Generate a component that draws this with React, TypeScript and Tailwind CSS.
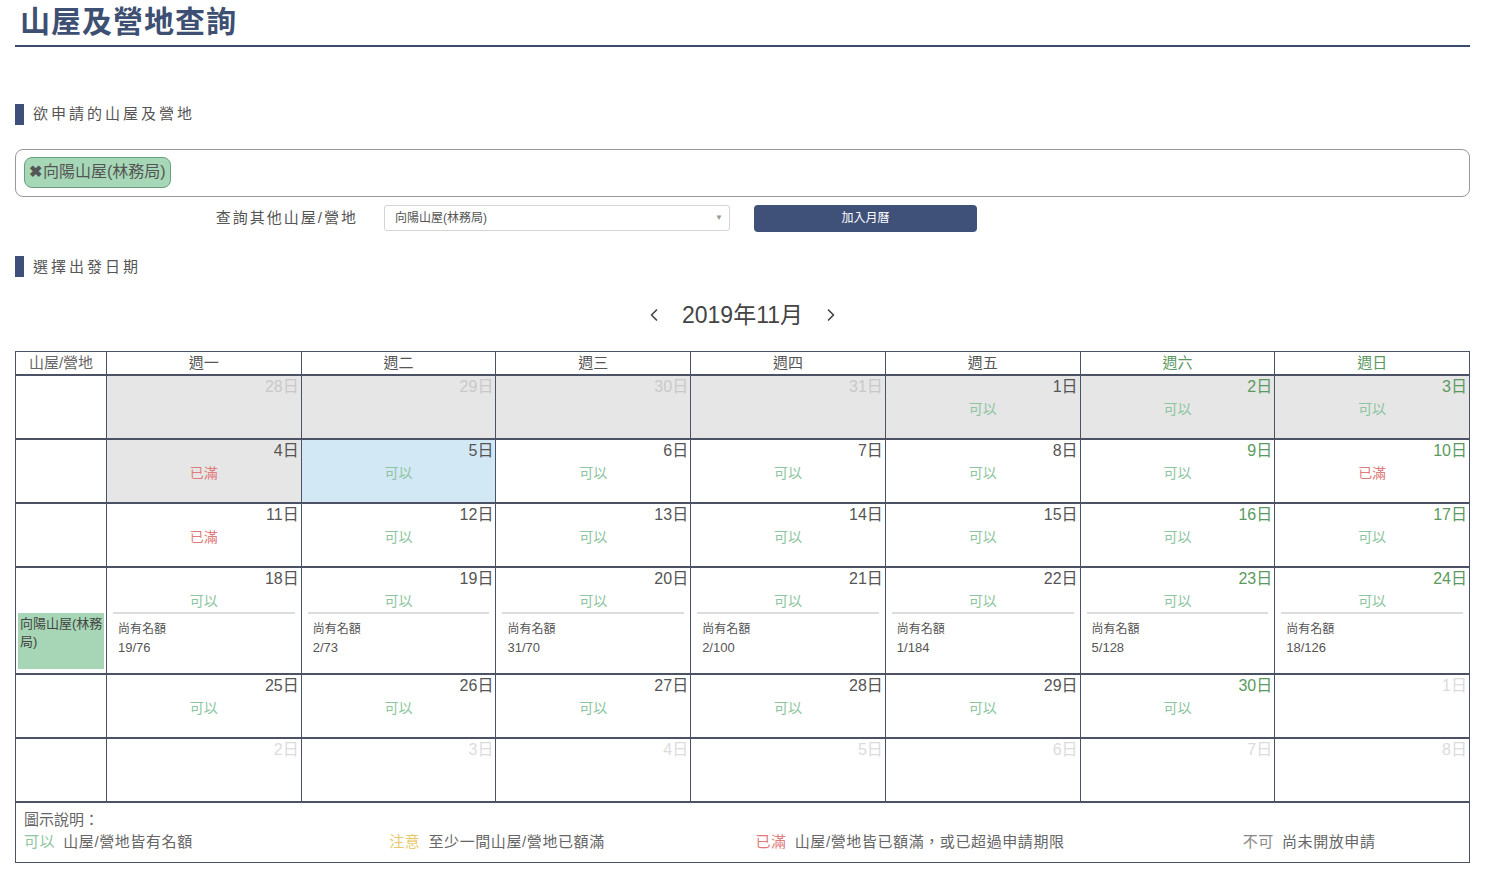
import { ChevronLeft, ChevronRight } from 'lucide-react';

type Day = {
  d: number;
  other?: boolean;
  past?: boolean;
  today?: boolean;
  s?: 'ok' | 'full';
  q?: string;
};

const weekNames = ['週一', '週二', '週三', '週四', '週五', '週六', '週日'];

const weeks: Day[][] = [
  [
    { d: 28, other: true, past: true },
    { d: 29, other: true, past: true },
    { d: 30, other: true, past: true },
    { d: 31, other: true, past: true },
    { d: 1, past: true, s: 'ok' },
    { d: 2, past: true, s: 'ok' },
    { d: 3, past: true, s: 'ok' },
  ],
  [
    { d: 4, past: true, s: 'full' },
    { d: 5, today: true, s: 'ok' },
    { d: 6, s: 'ok' },
    { d: 7, s: 'ok' },
    { d: 8, s: 'ok' },
    { d: 9, s: 'ok' },
    { d: 10, s: 'full' },
  ],
  [
    { d: 11, s: 'full' },
    { d: 12, s: 'ok' },
    { d: 13, s: 'ok' },
    { d: 14, s: 'ok' },
    { d: 15, s: 'ok' },
    { d: 16, s: 'ok' },
    { d: 17, s: 'ok' },
  ],
  [
    { d: 18, s: 'ok', q: '19/76' },
    { d: 19, s: 'ok', q: '2/73' },
    { d: 20, s: 'ok', q: '31/70' },
    { d: 21, s: 'ok', q: '2/100' },
    { d: 22, s: 'ok', q: '1/184' },
    { d: 23, s: 'ok', q: '5/128' },
    { d: 24, s: 'ok', q: '18/126' },
  ],
  [
    { d: 25, s: 'ok' },
    { d: 26, s: 'ok' },
    { d: 27, s: 'ok' },
    { d: 28, s: 'ok' },
    { d: 29, s: 'ok' },
    { d: 30, s: 'ok' },
    { d: 1, other: true },
  ],
  [
    { d: 2, other: true },
    { d: 3, other: true },
    { d: 4, other: true },
    { d: 5, other: true },
    { d: 6, other: true },
    { d: 7, other: true },
    { d: 8, other: true },
  ],
];

function SectionHeading({ title }: { title: string }) {
  return (
    <div className="flex items-center">
      <div className="w-[9px] h-[21px] bg-[#3e4f7a]" />
      <div className="ml-[9px] text-[15px] tracking-[3px] text-[#555]">{title}</div>
    </div>
  );
}

function DayCell({ day, col }: { day: Day; col: number }) {
  let bg = 'bg-white';
  if (day.past) bg = 'bg-[#e6e6e6]';
  if (day.today) bg = 'bg-[#d3e8f5]';

  let numColor = col >= 5 ? 'text-[#5a9a62]' : 'text-[#555]';
  if (day.other) numColor = day.past ? 'text-[#c9c9c9]' : 'text-[#dcdcdc]';

  return (
    <div className={`border-l border-[#4c5266] ${bg}`}>
      <div className={`text-right pr-[2px] text-[16px] leading-[22px] ${numColor}`}>{day.d}日</div>
      {day.s === 'ok' && (
        <div className="text-center text-[14px] leading-[20px] mt-[1px] text-[#8cc5a0]">可以</div>
      )}
      {day.s === 'full' && (
        <div className="text-center text-[14px] leading-[20px] mt-[1px] text-[#e07b7b]">已滿</div>
      )}
      {day.q && (
        <div>
          <div className="mx-[6px] mt-[1px] h-[2px] bg-[#dcdcdc]" />
          <div className="pl-[11px] mt-[6px] text-[12px] leading-[18px] text-[#555]">尚有名額</div>
          <div className="pl-[11px] mt-[1px] text-[13px] leading-[18px] text-[#555]">{day.q}</div>
        </div>
      )}
    </div>
  );
}

export default function App() {
  return (
    <div
      className="min-h-[876px] bg-white pl-[15px] pr-[30px] pb-[14px]"
      style={{ fontFamily: '"Liberation Sans", "Noto Sans CJK TC", sans-serif' }}
    >
      <div className="h-[47px] border-b-2 border-[#3b4a6b] pl-[5px]">
        <h1 className="text-[30px] leading-[44px] font-bold tracking-[1px] text-[#3d4f72]">山屋及營地查詢</h1>
      </div>

      <div className="mt-[56px]">
        <SectionHeading title="欲申請的山屋及營地" />
      </div>

      <div className="mt-[23px] h-[48px] border border-[#999] rounded-[8px] pt-[7px] pl-[8px]">
        <div className="inline-flex items-center h-[31px] pl-[4px] pr-[4px] bg-[#a6d7b6] border border-[#6a9f7c] rounded-[8px] text-[16px] text-[#555]">
          <span className="text-[16px] font-bold text-[#555] mr-[1px]">✖</span>
          向陽山屋(林務局)
        </div>
      </div>

      <div className="mt-[8px] flex items-center">
        <div className="w-[343px] text-right text-[15px] tracking-[2px] text-[#555]">查詢其他山屋/營地</div>
        <div className="ml-[26px] w-[346px] h-[26px] border border-[#d5d5d5] rounded-[3px] flex items-center justify-between pl-[10px] pr-[6px] text-[12px] text-[#555]">
          <span>向陽山屋(林務局)</span>
          <span className="text-[8px] text-[#999]">▼</span>
        </div>
        <button className="ml-[24px] w-[223px] h-[27px] rounded-[4px] bg-[#3f5079] text-white text-[12px]">加入月曆</button>
      </div>

      <div className="mt-[24px]">
        <SectionHeading title="選擇出發日期" />
      </div>

      <div className="mt-[22px] flex items-center justify-center text-[#444]">
        <ChevronLeft className="w-[20px] h-[20px]" strokeWidth={2} />
        <div className="mx-[18px] text-[23px] leading-[30px]">2019年11月</div>
        <ChevronRight className="w-[20px] h-[20px]" strokeWidth={2} />
      </div>

      <div className="mt-[21px] border border-[#4c5266]">
        <div className="grid grid-cols-[90px_repeat(7,minmax(0,1fr))] h-[22px] text-[15px] leading-[21px]">
          <div className="text-center text-[#666]">山屋/營地</div>
          {weekNames.map((w, i) => (
            <div
              key={w}
              className={`border-l border-[#4c5266] text-center ${i >= 5 ? 'text-[#5a9a62]' : 'text-[#555]'}`}
            >
              {w}
            </div>
          ))}
        </div>

        {weeks.map((week, wi) => (
          <div
            key={wi}
            className={`grid grid-cols-[90px_repeat(7,minmax(0,1fr))] border-t-2 border-[#4c5266] ${
              wi === 3 ? 'h-[107px]' : 'h-[64px]'
            }`}
          >
            {wi === 3 ? (
              <div className="flex flex-col justify-end pb-[4px] px-[2px]">
                <div className="h-[56px] bg-[#a6d6b5] pt-[2px] pl-[2px] text-[13px] leading-[18px] text-[#444]">
                  向陽山屋(林務局)
                </div>
              </div>
            ) : (
              <div />
            )}
            {week.map((day, di) => (
              <DayCell key={di} day={day} col={di} />
            ))}
          </div>
        ))}

        <div className="border-t-2 border-[#4c5266] h-[61px] pt-[7px] pl-[8px] text-[15px] leading-[20px] text-[#666]">
          <div>圖示說明：</div>
          <div className="grid grid-cols-4 mt-[2px] tracking-[0.6px]">
            <div>
              <span className="text-[#8cc5a0] mr-[8px]">可以</span>山屋/營地皆有名額
            </div>
            <div className="pl-[4px]">
              <span className="text-[#e8c96a] mr-[8px]">注意</span>至少一間山屋/營地已額滿
            </div>
            <div className="pl-[9px]">
              <span className="text-[#e07b7b] mr-[8px]">已滿</span>山屋/營地皆已額滿，或已超過申請期限
            </div>
            <div className="pl-[135px]">
              <span className="text-[#888] mr-[8px]">不可</span>尚未開放申請
            </div>
          </div>
        </div>
      </div>
    </div>
  );
}
